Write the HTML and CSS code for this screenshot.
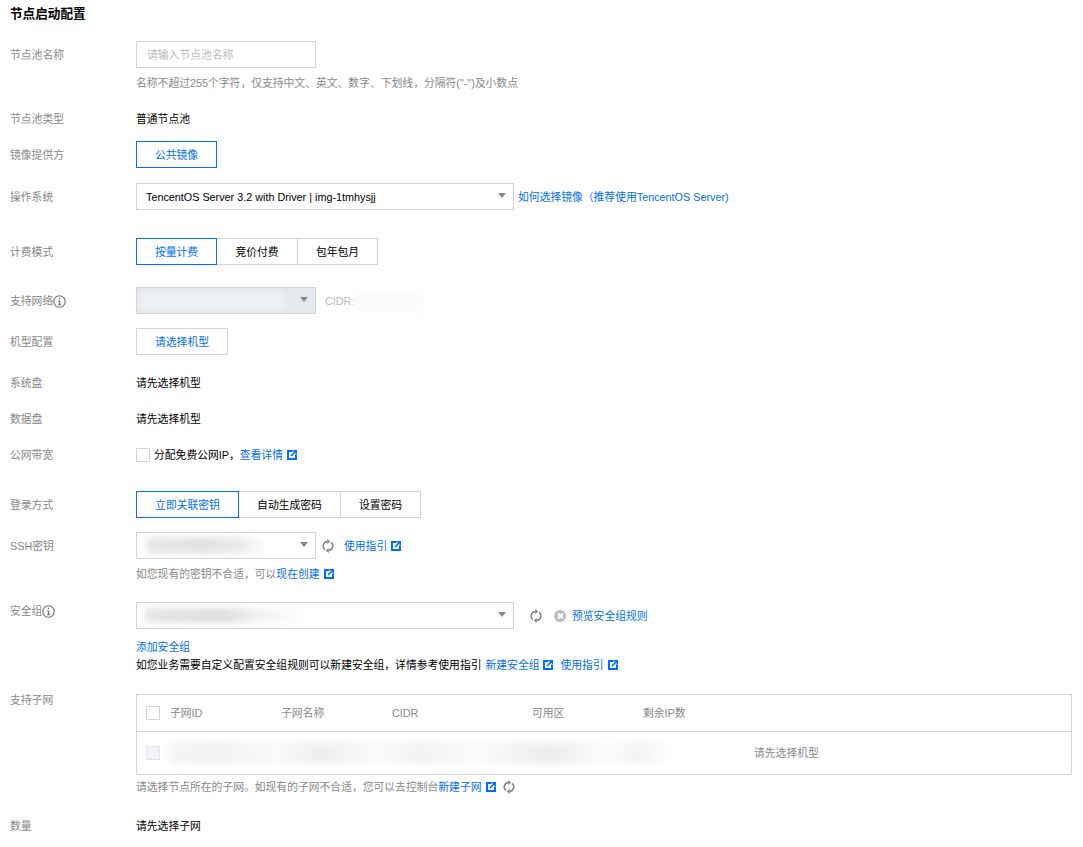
FILE: index.html
```html
<!DOCTYPE html>
<html lang="zh-CN">
<head>
<meta charset="utf-8">
<title>节点启动配置</title>
<link rel="stylesheet" href="styles.css">
</head>
<body>
<svg class="defs" width="0" height="0" aria-hidden="true">
  <symbol id="ext" viewBox="0 0 10 10">
    <path d="M0 0H5.5V2H2V8H8V4.5H10V10H0Z" fill="#006eff"/>
    <path d="M5.8 0H10V4.2H8.6V2.6L4.6 6.6L3.4 5.4L7.4 1.4H5.8Z" fill="#006eff"/>
  </symbol>
  <symbol id="refresh" viewBox="0 0 12 14">
    <path d="M2.9 10.6A4.6 4.6 0 0 1 5.4 2.5M9.1 3.4A4.6 4.6 0 0 1 6.6 11.5" fill="none" stroke="#888" stroke-width="1.6"/>
    <path d="M5.2 0L8.3 2.6L5.2 5Z M6.8 9L3.7 11.4L6.8 14Z" fill="#888"/>
  </symbol>
  <symbol id="info" viewBox="0 0 12 12">
    <circle cx="6" cy="6" r="5.3" fill="none" stroke="#777" stroke-width="1.1"/>
    <path d="M5.3 2.6H6.7V4H5.3Z M4.7 5H6.7V8.5H7.5V9.5H4.6V8.5H5.4V6H4.7Z" fill="#777"/>
  </symbol>
</svg>

<h1 class="title">节点启动配置</h1>

<div class="row row-first">
  <div class="label label-input">节点池名称</div>
  <div class="content">
    <input class="input" type="text" placeholder="请输入节点池名称">
    <p class="hint hint-name">名称不超过255个字符，仅支持中文、英文、数字、下划线，分隔符("-")及小数点</p>
  </div>
</div>

<div class="row gap-18">
  <div class="label">节点池类型</div>
  <div class="content text">普通节点池</div>
</div>

<div class="row gap-13">
  <div class="label label-input">镜像提供方</div>
  <div class="content"><div class="seg"><button class="seg-btn on w81">公共镜像</button></div></div>
</div>

<div class="row gap-15">
  <div class="label label-input">操作系统</div>
  <div class="content inline">
    <div class="select wide"><span class="select-text">TencentOS Server 3.2 with Driver | img-1tmhysjj</span><i class="caret"></i></div>
    <a class="link os-link">如何选择镜像（推荐使用TencentOS Server)</a>
  </div>
</div>

<div class="row gap-28">
  <div class="label label-input">计费模式</div>
  <div class="content">
    <div class="seg">
      <button class="seg-btn on w81">按量计费</button>
      <button class="seg-btn w82">竞价付费</button>
      <button class="seg-btn w81">包年包月</button>
    </div>
  </div>
</div>

<div class="row gap-22">
  <div class="label label-input">支持网络<svg class="info"><use href="#info"/></svg></div>
  <div class="content inline">
    <div class="select narrow disabled"><span class="blur blur-net"></span><i class="caret"></i></div>
    <span class="cidr">CIDR:</span><span class="blur blur-cidr"></span>
  </div>
</div>

<div class="row gap-14">
  <div class="label label-input">机型配置</div>
  <div class="content"><button class="plain-btn">请选择机型</button></div>
</div>

<div class="row gap-19">
  <div class="label">系统盘</div>
  <div class="content text">请先选择机型</div>
</div>

<div class="row gap-18">
  <div class="label">数据盘</div>
  <div class="content text">请先选择机型</div>
</div>

<div class="row gap-18">
  <div class="label">公网带宽</div>
  <div class="content inline text">
    <span class="check"></span><span class="check-text">分配免费公网IP，</span><a class="link">查看详情</a><svg class="ext"><use href="#ext"/></svg>
  </div>
</div>

<div class="row gap-27">
  <div class="label label-input">登录方式</div>
  <div class="content">
    <div class="seg">
      <button class="seg-btn on w103">立即关联密钥</button>
      <button class="seg-btn w103">自动生成密码</button>
      <button class="seg-btn w81">设置密码</button>
    </div>
  </div>
</div>

<div class="row gap-14">
  <div class="label label-input">SSH密钥</div>
  <div class="content">
    <div class="inline">
      <div class="select narrow"><span class="blur blur-ssh"></span><i class="caret"></i></div>
      <svg class="refresh r-ssh"><use href="#refresh"/></svg>
      <a class="link guide">使用指引</a><svg class="ext"><use href="#ext"/></svg>
    </div>
    <p class="hint hint-ssh">如您现有的密钥不合适，可以<a class="link">现在创建</a><svg class="ext"><use href="#ext"/></svg></p>
  </div>
</div>

<div class="row gap-19">
  <div class="label">安全组<svg class="info"><use href="#info"/></svg></div>
  <div class="content">
    <div class="inline">
      <div class="select wide"><span class="blur blur-sg"></span><i class="caret"></i></div>
      <svg class="refresh r-sg"><use href="#refresh"/></svg>
      <span class="clear"></span>
      <a class="link">预览安全组规则</a>
    </div>
    <a class="link add-sg">添加安全组</a>
    <p class="sg-note">如您业务需要自定义配置安全组规则可以新建安全组，详情参考使用指引 <a class="link note-new">新建安全组</a><svg class="ext"><use href="#ext"/></svg><a class="link note-guide">使用指引</a><svg class="ext"><use href="#ext"/></svg></p>
  </div>
</div>

<div class="row gap-20">
  <div class="label label-sub">支持子网</div>
  <div class="content">
    <div class="table">
      <div class="thead">
        <span class="check cell-check"></span>
        <span class="th c1">子网ID</span>
        <span class="th c2">子网名称</span>
        <span class="th c3">CIDR</span>
        <span class="th c4">可用区</span>
        <span class="th c5">剩余IP数</span>
      </div>
      <div class="tbody">
        <span class="check check-off cell-check"></span>
        <span class="blur blur-row"></span>
        <span class="tip">请先选择机型</span>
      </div>
    </div>
    <p class="hint hint-subnet">请选择节点所在的子网。如现有的子网不合适，您可以去控制台<a class="link">新建子网</a><svg class="ext"><use href="#ext"/></svg><svg class="refresh r-sub"><use href="#refresh"/></svg></p>
  </div>
</div>

<div class="row gap-21">
  <div class="label">数量</div>
  <div class="content text">请先选择子网</div>
</div>
</body>
</html>
```

FILE: styles.css
```css
* { box-sizing: border-box; }
html, body { margin: 0; padding: 0; }
body {
  padding: 5px 11px 0 10px;
  background: #fff;
  color: #000;
  font: 10.8px/18px "Liberation Sans", "Noto Sans CJK SC", sans-serif;
  overflow: hidden;
}
.defs { position: absolute; }
.title { margin: 0; font-size: 12.6px; line-height: 18px; font-weight: 700; }
p { margin: 0; }

.row { display: flex; align-items: flex-start; }
.row-first { margin-top: 18px; }
.gap-13 { margin-top: 13px; }
.gap-14 { margin-top: 14px; }
.gap-15 { margin-top: 15px; }
.gap-18 { margin-top: 18px; }
.gap-19 { margin-top: 19px; }
.gap-20 { margin-top: 20px; }
.gap-21 { margin-top: 21px; }
.gap-22 { margin-top: 22px; }
.gap-27 { margin-top: 27px; }
.gap-28 { margin-top: 28px; }

.label { flex: 0 0 126px; color: #888; display: flex; align-items: center; }
.label-input { padding-top: 5px; }
.label-sub { line-height: 12px; }
.content { flex: 1; min-width: 0; }
.text { color: #000; }
.inline { display: flex; align-items: center; }

.input {
  display: block;
  width: 180px;
  height: 27px;
  padding: 0 10px;
  border: 1px solid #cfd5de;
  border-radius: 0;
  outline: none;
  font: inherit;
}
.input::placeholder { color: #bbb; opacity: 1; }
.hint { color: #888; }
.hint-name { margin-top: 6px; }
.hint-ssh { margin-top: 6px; }
.hint-subnet { margin-top: 3px; display: flex; align-items: center; }

.link { color: #006eff; text-decoration: none; }
.os-link { margin-left: 4px; }
.ext { flex: none; display: inline-block; width: 10px; height: 10px; margin-left: 4px; vertical-align: -1px; }

.seg { display: flex; }
.seg-btn {
  height: 27px;
  padding: 0;
  margin-left: -1px;
  border: 1px solid #cfd5de;
  background: #fff;
  color: #000;
  font: inherit;
}
.seg-btn:first-child { margin-left: 0; }
.seg-btn.on { position: relative; z-index: 1; border-color: #006eff; color: #006eff; }
.w81 { width: 81px; }
.w82 { width: 82px; }
.w103 { width: 103px; }

.plain-btn {
  display: block;
  width: 92px;
  height: 27px;
  padding: 0;
  border: 1px solid #cfd5de;
  background: #fff;
  color: #006eff;
  font: inherit;
}

.select {
  position: relative;
  flex: none;
  height: 27px;
  border: 1px solid #cfd5de;
  background: #fff;
  display: flex;
  align-items: center;
  padding-left: 9px;
}
.select.wide { width: 378px; }
.select.narrow { width: 180px; }
.select.disabled { background: #e5e8ed; padding-left: 3px; }
.select-text { white-space: nowrap; }
.caret {
  position: absolute;
  right: 7px;
  top: 9px;
  border-style: solid;
  border-width: 5px 4px 0;
  border-color: #888 transparent transparent;
}

.blur { display: block; flex: none; filter: blur(3px); }
.blur-net { width: 144px; height: 18px; background: #eef0f3; }
.blur-cidr { width: 70px; height: 22px; background: #fbfbfb; }
.cidr { margin-left: 9px; color: #bbb; }
.blur-ssh { width: 118px; height: 17px; background: linear-gradient(90deg, #e8e8e8, #e2e2e2 50%, #ececec 80%, #fbfbfb); }
.blur-sg { width: 158px; height: 15px; margin-left: -1px; background: linear-gradient(90deg, #e6e6e6, #dedede 50%, #f2f2f2 72%, #fefefe); }
.blur-row {
  position: absolute;
  left: 32px;
  top: 10px;
  width: 500px;
  height: 22px;
  background: linear-gradient(90deg, #f5f5f5, #f2f2f2 10%, #fafafa 22%, #eeeeee 30%, #fbfbfb 42%, #f2f2f2 50%, #fbfbfb 62%, #ececec 76%, #fdfdfd 88%, #f2f2f2 94%, #ffffff);
}

.refresh { flex: none; width: 12px; height: 14px; }
.r-ssh { margin-left: 6px; }
.r-sg { margin-left: 16px; }
.r-sub { margin-left: 7px; }
.guide { margin-left: 10px; }

.clear {
  position: relative;
  flex: none;
  width: 12px;
  height: 12px;
  margin: 0 6px 0 12px;
  border-radius: 50%;
  background: #bbb;
}
.clear::before, .clear::after {
  content: "";
  position: absolute;
  left: 2.5px;
  top: 5px;
  width: 7px;
  height: 2px;
  background: #fff;
  transform: rotate(45deg);
}
.clear::after { transform: rotate(-45deg); }

.info { flex: none; width: 13px; height: 13px; margin-left: 0; }
.check { flex: none; display: block; width: 14px; height: 14px; border: 1px solid #cfd5de; background: #fff; }
.check-off { background: #f2f4f8; border-color: #e3e6ec; }
.check-text { margin-left: 4px; }

.add-sg { display: block; margin-top: 9px; }
.sg-note { white-space: nowrap; }
.note-new { margin-left: 1px; }
.note-guide { margin-left: 7px; }

.table { width: 936px; height: 81px; border: 1px solid #cfd5de; }
.thead, .tbody { position: relative; display: flex; align-items: center; padding-left: 9px; }
.thead { height: 37px; border-bottom: 1px solid #cfd5de; }
.tbody { height: 42px; }
.cell-check { position: relative; z-index: 1; }
.th { position: absolute; top: 9px; color: #888; white-space: nowrap; }
.c1 { left: 33px; }
.c2 { left: 144px; }
.c3 { left: 255px; }
.c4 { left: 395px; }
.c5 { left: 506px; }
.tip { position: absolute; left: 617px; top: 12px; color: #888; }
```
